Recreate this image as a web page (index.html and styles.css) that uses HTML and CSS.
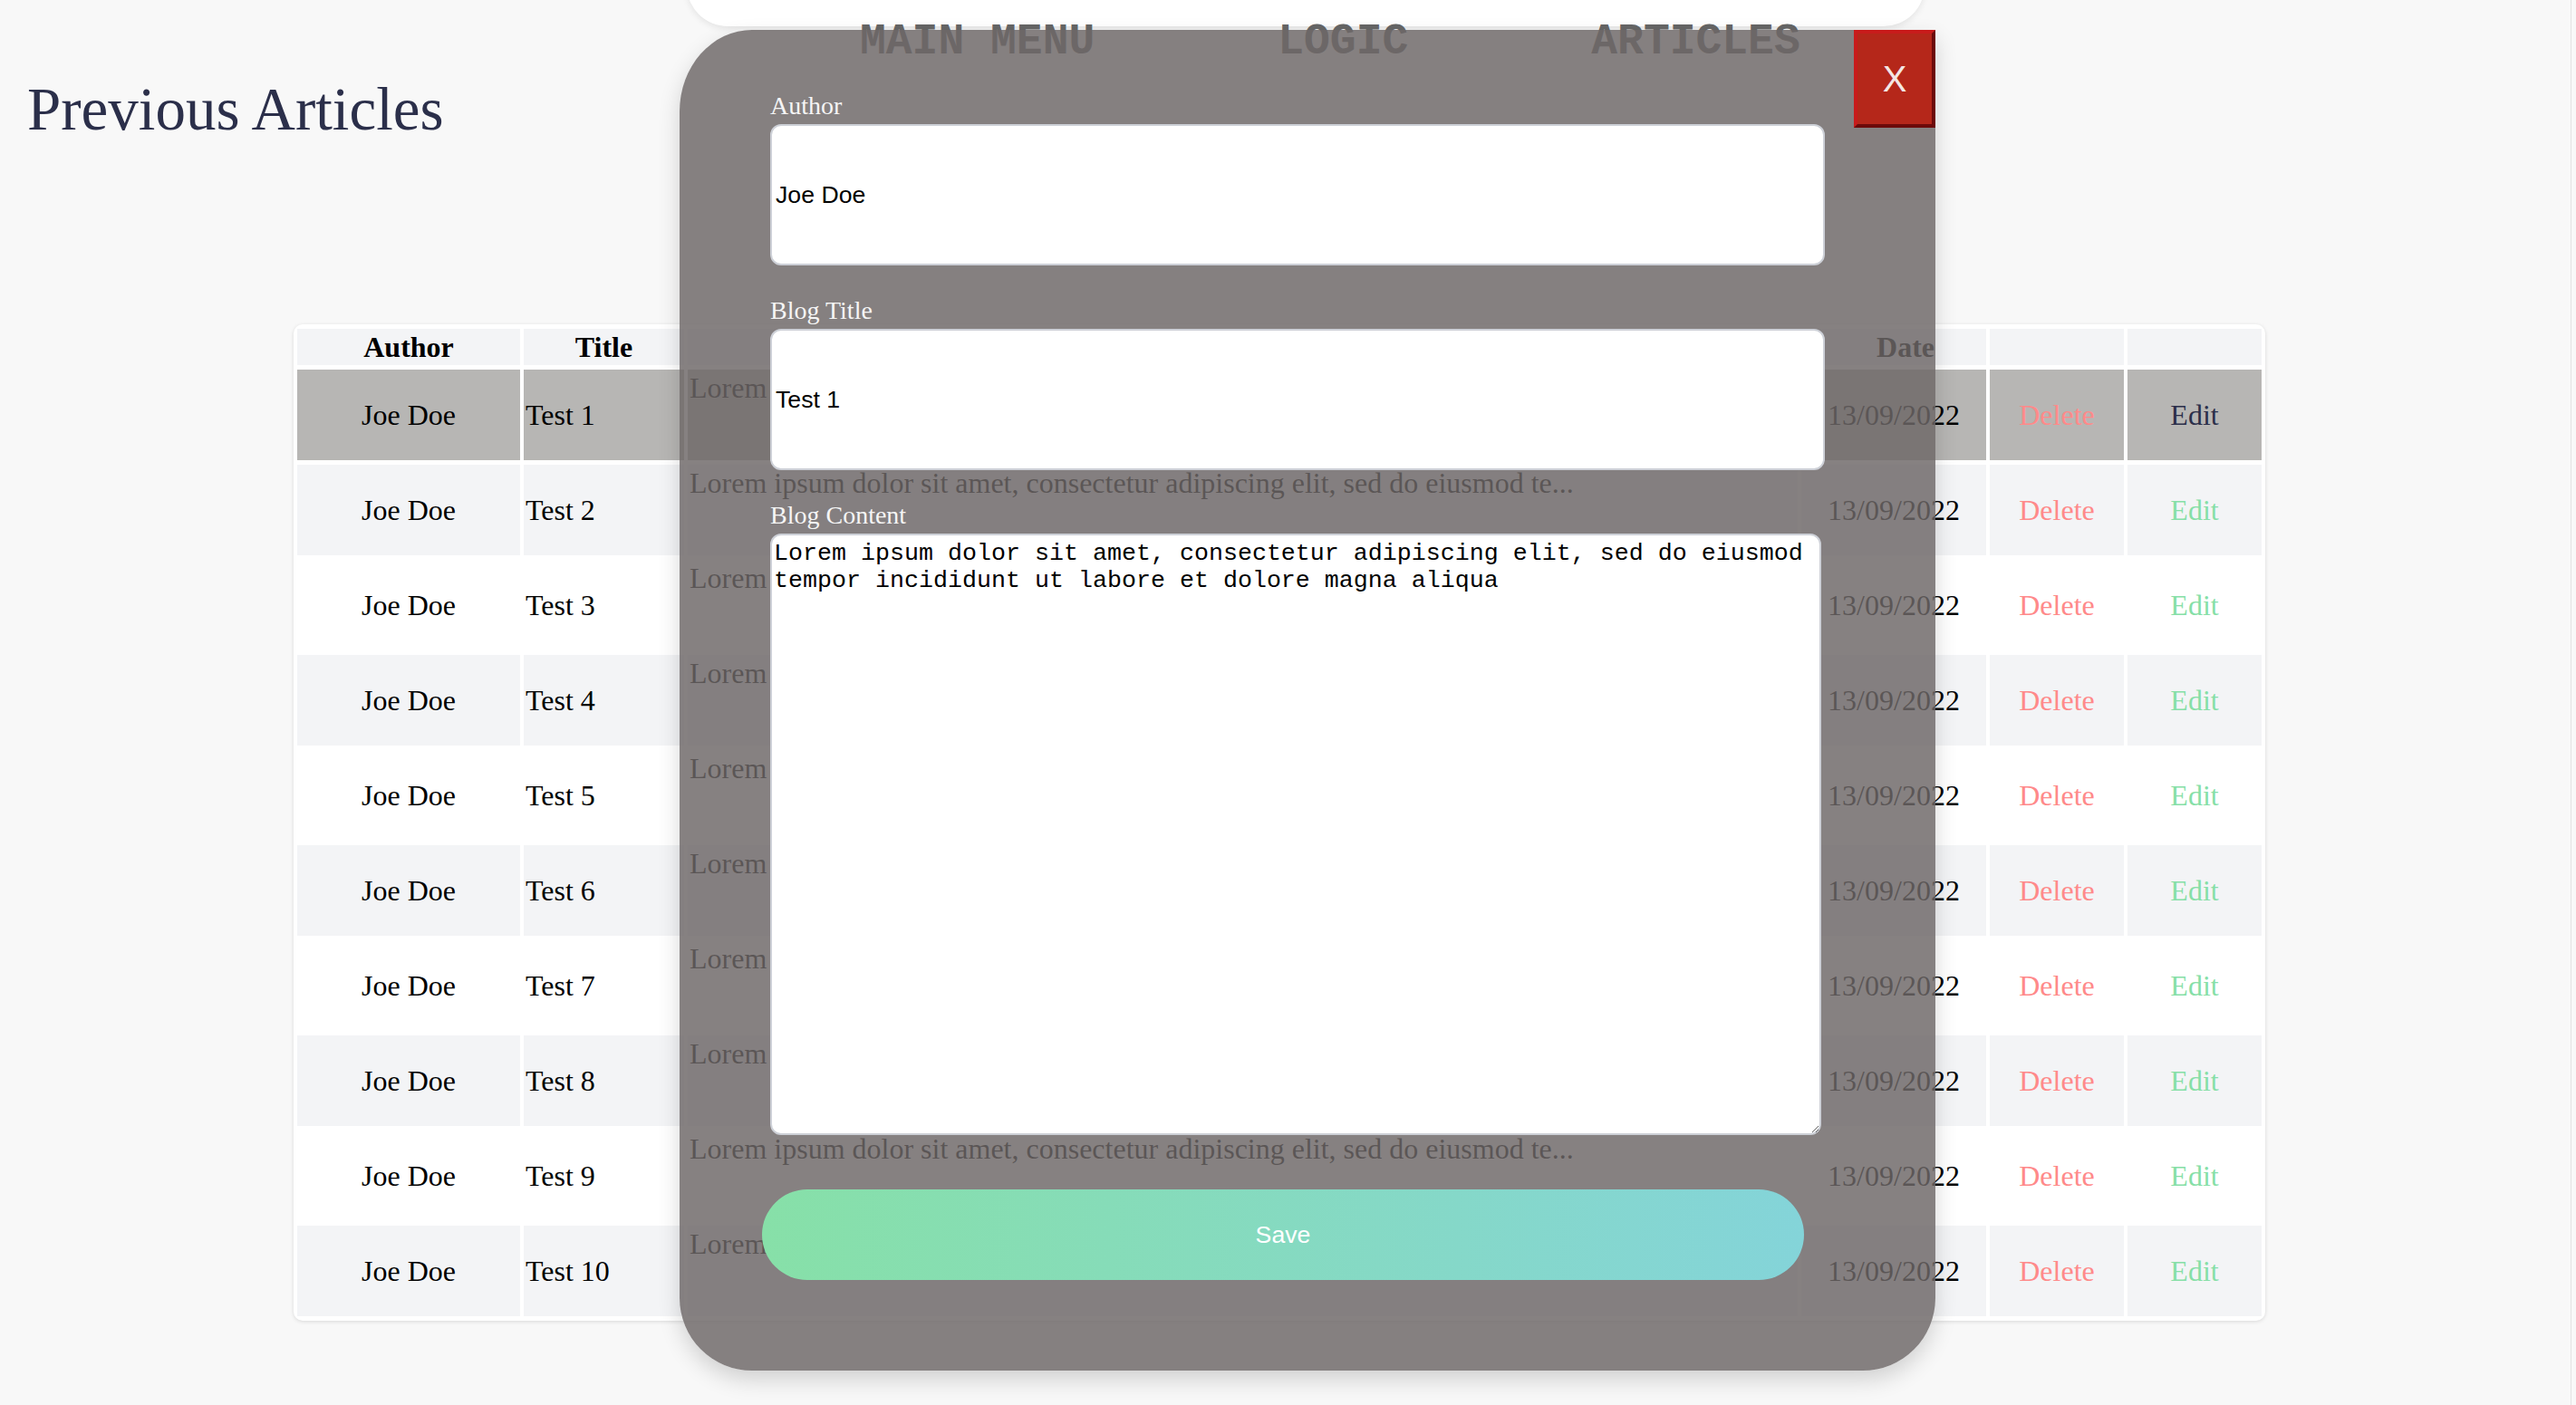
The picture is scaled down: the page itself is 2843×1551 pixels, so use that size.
FILE: index.html
```html
<!DOCTYPE html>
<html lang="en">
<head>
<meta charset="utf-8">
<title>Previous Articles</title>
<link rel="stylesheet" href="styles.css">
</head>
<body>
<div class="page">
  <nav class="site-nav">
    <div class="nav-links">
      <span class="nav-link">MAIN MENU</span>
      <span class="nav-link">LOGIC</span>
      <span class="nav-link">ARTICLES</span>
    </div>
  </nav>

  <h1 class="page-title">Previous Articles</h1>

  <div class="articles-card">
    <table class="articles">
      <colgroup>
        <col class="col-author">
        <col class="col-title">
        <col class="col-content">
        <col class="col-date">
        <col class="col-action">
        <col class="col-action">
      </colgroup>
      <thead>
        <tr>
          <th>Author</th>
          <th>Title</th>
          <th>Content</th>
          <th class="th-date">Date</th>
          <th></th>
          <th></th>
        </tr>
      </thead>
      <tbody>
        <tr class="row selected">
          <td class="c-author">Joe Doe</td>
          <td class="c-title">Test 1</td>
          <td class="c-content">Lorem ipsum dolor sit amet, consectetur adipiscing elit, sed do eiusmod te...</td>
          <td class="c-date">13/09/2022</td>
          <td><button class="act act-delete">Delete</button></td>
          <td><button class="act act-edit">Edit</button></td>
        </tr>
        <tr class="row">
          <td class="c-author">Joe Doe</td>
          <td class="c-title">Test 2</td>
          <td class="c-content">Lorem ipsum dolor sit amet, consectetur adipiscing elit, sed do eiusmod te...</td>
          <td class="c-date">13/09/2022</td>
          <td><button class="act act-delete">Delete</button></td>
          <td><button class="act act-edit">Edit</button></td>
        </tr>
        <tr class="row">
          <td class="c-author">Joe Doe</td>
          <td class="c-title">Test 3</td>
          <td class="c-content">Lorem ipsum dolor sit amet, consectetur adipiscing elit, sed do eiusmod te...</td>
          <td class="c-date">13/09/2022</td>
          <td><button class="act act-delete">Delete</button></td>
          <td><button class="act act-edit">Edit</button></td>
        </tr>
        <tr class="row">
          <td class="c-author">Joe Doe</td>
          <td class="c-title">Test 4</td>
          <td class="c-content">Lorem ipsum dolor sit amet, consectetur adipiscing elit, sed do eiusmod te...</td>
          <td class="c-date">13/09/2022</td>
          <td><button class="act act-delete">Delete</button></td>
          <td><button class="act act-edit">Edit</button></td>
        </tr>
        <tr class="row">
          <td class="c-author">Joe Doe</td>
          <td class="c-title">Test 5</td>
          <td class="c-content">Lorem ipsum dolor sit amet, consectetur adipiscing elit, sed do eiusmod te...</td>
          <td class="c-date">13/09/2022</td>
          <td><button class="act act-delete">Delete</button></td>
          <td><button class="act act-edit">Edit</button></td>
        </tr>
        <tr class="row">
          <td class="c-author">Joe Doe</td>
          <td class="c-title">Test 6</td>
          <td class="c-content">Lorem ipsum dolor sit amet, consectetur adipiscing elit, sed do eiusmod te...</td>
          <td class="c-date">13/09/2022</td>
          <td><button class="act act-delete">Delete</button></td>
          <td><button class="act act-edit">Edit</button></td>
        </tr>
        <tr class="row">
          <td class="c-author">Joe Doe</td>
          <td class="c-title">Test 7</td>
          <td class="c-content">Lorem ipsum dolor sit amet, consectetur adipiscing elit, sed do eiusmod te...</td>
          <td class="c-date">13/09/2022</td>
          <td><button class="act act-delete">Delete</button></td>
          <td><button class="act act-edit">Edit</button></td>
        </tr>
        <tr class="row">
          <td class="c-author">Joe Doe</td>
          <td class="c-title">Test 8</td>
          <td class="c-content">Lorem ipsum dolor sit amet, consectetur adipiscing elit, sed do eiusmod te...</td>
          <td class="c-date">13/09/2022</td>
          <td><button class="act act-delete">Delete</button></td>
          <td><button class="act act-edit">Edit</button></td>
        </tr>
        <tr class="row">
          <td class="c-author">Joe Doe</td>
          <td class="c-title">Test 9</td>
          <td class="c-content">Lorem ipsum dolor sit amet, consectetur adipiscing elit, sed do eiusmod te...</td>
          <td class="c-date">13/09/2022</td>
          <td><button class="act act-delete">Delete</button></td>
          <td><button class="act act-edit">Edit</button></td>
        </tr>
        <tr class="row">
          <td class="c-author">Joe Doe</td>
          <td class="c-title">Test 10</td>
          <td class="c-content">Lorem ipsum dolor sit amet, consectetur adipiscing elit, sed do eiusmod te...</td>
          <td class="c-date">13/09/2022</td>
          <td><button class="act act-delete">Delete</button></td>
          <td><button class="act act-edit">Edit</button></td>
        </tr>
      </tbody>
    </table>
  </div>

  <div class="modal">
    <button class="close-btn">X</button>
    <form class="edit-form">
      <div class="field">
        <label class="field-label">Author</label>
        <input class="text-input" type="text" value="Joe Doe">
      </div>
      <div class="field">
        <label class="field-label">Blog Title</label>
        <input class="text-input" type="text" value="Test 1">
      </div>
      <div class="field">
        <label class="field-label">Blog Content</label>
        <textarea class="text-area">Lorem ipsum dolor sit amet, consectetur adipiscing elit, sed do eiusmod tempor incididunt ut labore et dolore magna aliqua</textarea>
      </div>
      <button class="save-btn" type="button">Save</button>
    </form>
  </div>
</div>
</body>
</html>
```

FILE: styles.css
```css
* {
  box-sizing: border-box;
}

html,
body {
  margin: 0;
  padding: 0;
}

body {
  background: #f8f8f8;
  font-family: "Liberation Serif", "Times New Roman", serif;
  color: #000;
}

.page {
  position: relative;
  width: 2838px;
  height: 1551px;
  border-right: 1px solid #e3e3e3;
  overflow: hidden;
}

/* top navigation */
.site-nav {
  position: absolute;
  left: 758px;
  top: -61px;
  width: 1366px;
  height: 90px;
  background: #fff;
  border-radius: 60px;
  box-shadow: 0 3px 7px rgba(0, 0, 0, 0.08);
  z-index: 1;
}

.nav-links {
  display: flex;
  gap: 202px;
  padding: 80px 0 0 191px;
  font-family: "Liberation Mono", "Courier New", monospace;
  font-weight: bold;
  font-size: 48px;
  line-height: 54px;
  color: #666;
  white-space: pre;
}

/* title */
.page-title {
  margin: 0;
  padding: 82px 0 0 30px;
  font-size: 67px;
  line-height: 76px;
  font-weight: normal;
  color: #2b2f4a;
}

/* table */
.articles-card {
  margin: 200px 0 0 324px;
  width: 2176px;
  background: #fff;
  border-radius: 10px;
  box-shadow: 0 1px 4px rgba(0, 0, 0, 0.13);
}

.articles {
  width: 100%;
  table-layout: fixed;
  border-spacing: 4px 5px;
  font-size: 32px;
}

.col-author { width: 246px; }
.col-title { width: 177px; }
.col-date { width: 204px; }
.col-action { width: 148px; }

.articles th,
.articles td {
  padding: 2px;
}

.articles thead tr {
  height: 40px;
}

.articles th {
  background: #f3f4f6;
  font-weight: bold;
  text-align: center;
  line-height: 36px;
}

.articles th.th-date {
  padding-left: 28px;
}

.articles tbody tr {
  height: 100px;
}

.articles td {
  text-align: center;
  vertical-align: middle;
  white-space: nowrap;
  overflow: hidden;
  line-height: 36px;
}

.articles tbody tr:nth-child(even) td {
  background: #f3f4f6;
}

.articles tbody tr:nth-child(odd) td {
  background: #fff;
}

.articles tbody tr.selected td {
  background: #b7b6b4;
}

.articles td.c-title {
  text-align: left;
}

.articles td.c-content {
  text-align: left;
  vertical-align: top;
  text-overflow: ellipsis;
}

.act {
  border: none;
  background: none;
  padding: 0;
  font-family: inherit;
  font-size: 32px;
  line-height: 36px;
  cursor: pointer;
}

.act-delete {
  color: #ff8a8a;
}

.act-edit {
  color: #86dfa7;
}

.selected .act-edit {
  color: #2b2f4a;
}

/* modal */
.modal {
  position: absolute;
  left: 750px;
  top: 33px;
  width: 1386px;
  height: 1480px;
  padding: 68px 0 0 100px;
  background: rgba(110, 104, 104, 0.83);
  border-radius: 80px 0 80px 80px / 90px 0 80px 80px;
  box-shadow: 0 10px 24px rgba(0, 0, 0, 0.16);
  z-index: 5;
}

.close-btn {
  position: absolute;
  top: 0;
  right: 0;
  width: 90px;
  height: 108px;
  padding: 0;
  background: #b5271a;
  border: 4px solid;
  border-color: #c81b1b #6c0a0a #6c0a0a #c81b1b;
  color: #f4e6e4;
  font-family: "Liberation Sans", Arial, sans-serif;
  font-size: 40px;
  line-height: 1;
}

.edit-form {
  display: flex;
  flex-direction: column;
  align-items: flex-start;
}

.field + .field {
  margin-top: 34px;
}

.field-label {
  display: block;
  font-size: 28px;
  line-height: 32px;
  color: #f5f5f5;
}

.text-input {
  display: block;
  width: 1164px;
  height: 156px;
  margin: 4px 0 0;
  padding: 2px 4px;
  background: #fff;
  border: 2px solid #cdd0d7;
  border-radius: 12px;
  font-family: "Liberation Sans", Arial, sans-serif;
  font-size: 26.667px;
  color: #000;
  outline: none;
}

.text-area {
  display: block;
  width: 1160px;
  height: 664px;
  margin: 4px 0 0;
  padding: 5px 2px 4px;
  background: #fff;
  border: 2px solid #cdd0d7;
  border-radius: 12px;
  font-family: "Liberation Mono", "Courier New", monospace;
  font-size: 26.667px;
  line-height: 30px;
  color: #000;
  outline: none;
}

.save-btn {
  display: block;
  width: 1150px;
  height: 100px;
  margin: 60px 0 0 -9px;
  padding: 0;
  border: none;
  border-radius: 50px;
  background: linear-gradient(90deg, #87e0a8, #84d4d9);
  color: #fff;
  font-family: "Liberation Sans", Arial, sans-serif;
  font-size: 26.667px;
}
```
